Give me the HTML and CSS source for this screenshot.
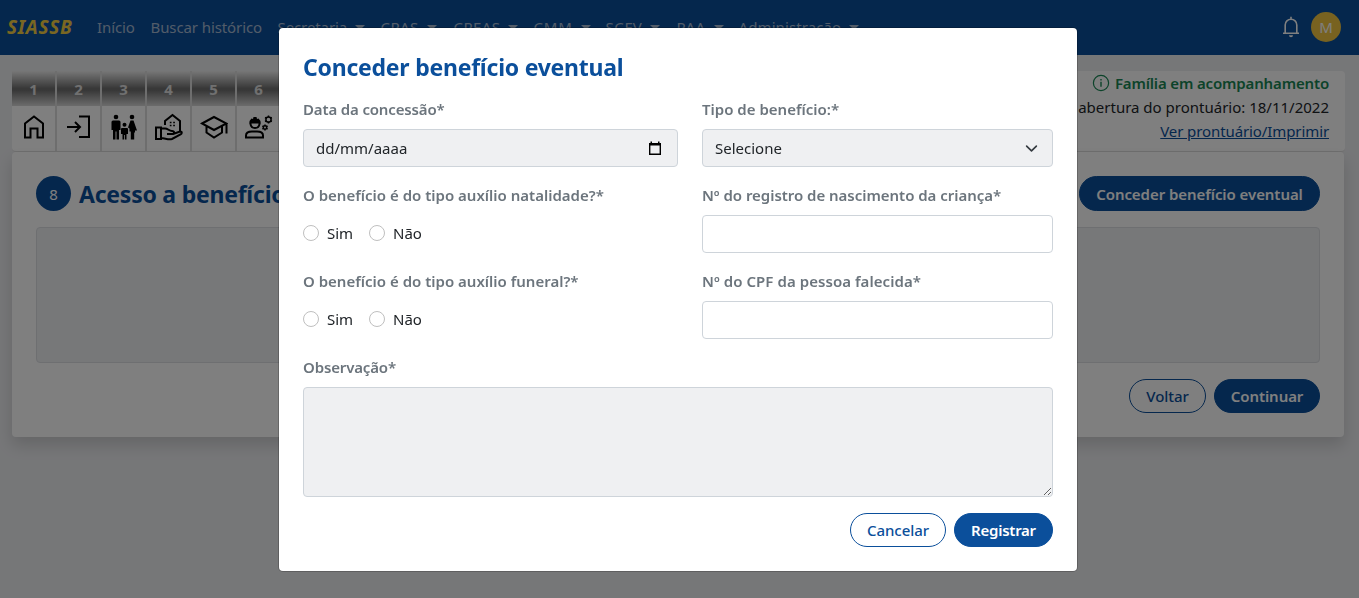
FILE: index.html
```html
<!DOCTYPE html>
<html lang="pt-BR">
<head>
<meta charset="utf-8">
<title>SIASSB</title>
<link rel="stylesheet" href="styles.css">
</head>
<body>
<header class="navbar">
  <span class="brand">SIASSB</span>
  <nav class="menu">
    <a class="inicio">Início</a>
    <a class="buscar">Buscar histórico</a>
    <a class="drop m1">Secretaria</a>
    <a class="drop m2">CRAS</a>
    <a class="drop m3">CREAS</a>
    <a class="drop m4">CMM</a>
    <a class="drop m5">SCFV</a>
    <a class="drop m6">PAA</a>
    <a class="drop m7">Administração</a>
  </nav>
  <svg class="bell" width="18" height="22" viewBox="0 0 18 22" fill="none" stroke="#fff" stroke-width="1.6"><path d="M1 17.3h16M3.2 17V9a5.8 5.8 0 0 1 11.6 0v8M9 3V.8"/><path d="M7 19.2h4a2 2 0 0 1-4 0z" fill="#fff" stroke="none"/></svg>
  <span class="avatar">M</span>
</header>
<main>
  <section class="record">
    <ol class="steps">
      <li><b>1</b><span><svg viewBox="0 0 28 28"><path d="M5 24.500V10.500L14 3.500l9 7v14h-5.500v-9h-7v9z"/></svg></span></li>
      <li><b>2</b><span><svg viewBox="0 0 28 28"><path d="M14 3.500h10v20.500H14M2 14h13M10 9l5 5-5 5"/></svg></span></li>
      <li><b>3</b><span><svg class="solid" viewBox="0 0 28 28"><circle cx="6" cy="4" r="2.300"/><circle cx="22" cy="4" r="2.300"/><circle cx="14.500" cy="11.700" r="2"/><path d="M3 7.500h6q1.500 0 1.500 1.500v8H9v9.500H6.500v-8h-1v8H3V17H1.500V9Q1.500 7.500 3 7.500zM20.500 7.500h3l3.500 10h-2v2h-.800v7h-3.400v-8H19.500v-3l-1.500-1zM12 15h5q1 0 1 1v5h-1.500v5.500h-1.600V22h-.800v4.500H12.500V21h-1.500v-5q0-1 1-1z"/></svg></span></li>
      <li><b>4</b><span><svg viewBox="0 0 28 28"><path d="M10 12V8l7.500-6L25 8v10"/><path d="M1 14.500h5V26H1zM6 15.500h4c3 0 4 2.500 7 2.500s2.500 3 0 3h-5M18 21l7-2.500c2.500 0 2 2 .500 3L17 26c-4 1-7-1-11-1"/><path d="M14.800 9.500h1.700m1.700 0h1.700m-5.100 3h1.700m1.700 0h1.700" stroke-width="1.500"/></svg></span></li>
      <li><b>5</b><span><svg viewBox="0 0 28 28"><path d="M2 10.500L14 4l12.500 6.500L14 17zM6.500 13v6.500L14 24.500l8-5V13M26.500 10.500v10"/></svg></span></li>
      <li><b>6</b><span><svg viewBox="0 0 28 28"><path d="M1 24.500v-2q0-4 6-4h5q6 0 6 4v2z"/><path d="M5.500 9.500v1.500q.500 4 4.500 4t4.500-4V9.500"/><path class="fill" d="M4.500 10.500V8l2-2.500 1.500.500.500-2h3l.500 2 1.500-.500 2 2.500v2.500z"/><g stroke-width="1.500"><circle cx="23.500" cy="6.500" r="2.600"/><circle cx="20" cy="14.500" r="1.700"/><path d="M23.500 2.500v1.400m0 5.200v1.400M20 4.500l1.200.700m4.500 2.600l1.200.700m0-4l-1.200.700m-4.500 2.600l-1.200.700M20 11.500v1.300m0 3.400v1.300M17.400 13l1.100.700m3 1.700l1.100.600m0-3l-1.100.700m-3 1.700l-1.100.600"/></g></svg></span></li>
    </ol>
    <div class="status">
      <strong><svg width="18" height="18" viewBox="0 0 18 18" fill="none" stroke="#198754" stroke-width="1.200"><circle cx="9" cy="9" r="7.600"/><path d="M9 7.800v5M9 5v1.400" stroke-width="1.400"/></svg><span>Família em acompanhamento</span></strong>
      <span class="opened">abertura do prontuário: 18/11/2022</span>
      <a>Ver prontuário/Imprimir</a>
    </div>
  </section>
  <section class="card">
    <div class="card-head">
      <span class="num">8</span>
      <h2>Acesso a benefícios</h2>
      <button class="btn primary open">Conceder benefício eventual</button>
    </div>
    <div class="empty"></div>
    <div class="actions">
      <button class="btn outline voltar">Voltar</button>
      <button class="btn primary continuar">Continuar</button>
    </div>
  </section>
</main>
<div class="backdrop">
  <form class="modal">
    <h1>Conceder benefício eventual</h1>
    <div class="grid">
      <div class="field">
        <label class="l1">Data da concessão*</label>
        <div class="control filled"><span class="date">dd/mm/aaaa</span><svg class="cal" width="14" height="15" viewBox="0 0 14 15"><path d="M1.700 3v10.300h10.600V3" fill="none" stroke="#000" stroke-width="1.400"/><path d="M1 2h12v2.600H1zM2.500.5H4V2H2.500zM10 .5h1.500V2H10z"/></svg></div>
      </div>
      <div class="field">
        <label class="l2">Tipo de benefício:*</label>
        <div class="control filled"><span class="select">Selecione</span><svg class="chev" width="13" height="13" viewBox="0 0 16 16" fill="none" stroke="#343a40" stroke-width="2" stroke-linecap="round" stroke-linejoin="round"><path d="M2 5l6 6 6-6"/></svg></div>
      </div>
      <div class="field">
        <label class="l3">O benefício é do tipo auxílio natalidade?*</label>
        <div class="radios"><i></i><span class="sim">Sim</span><i></i><span class="nao">Não</span></div>
      </div>
      <div class="field">
        <label class="l4">Nº do registro de nascimento da criança*</label>
        <div class="control"></div>
      </div>
      <div class="field">
        <label class="l5">O benefício é do tipo auxílio funeral?*</label>
        <div class="radios"><i></i><span class="sim">Sim</span><i></i><span class="nao">Não</span></div>
      </div>
      <div class="field">
        <label class="l6">Nº do CPF da pessoa falecida*</label>
        <div class="control"></div>
      </div>
      <div class="field wide">
        <label class="l7">Observação*</label>
        <textarea class="filled"></textarea>
      </div>
    </div>
    <div class="actions">
      <button type="button" class="btn outline cancelar">Cancelar</button>
      <button type="button" class="btn primary registrar">Registrar</button>
    </div>
  </form>
</div>
</body>
</html>
```
FILE: styles.css
```css
* { box-sizing: border-box; }
body { margin: 0; height: 598px; overflow: hidden; background: #edeef1; color: #212529; font: 15px/24px "Noto Sans", sans-serif; }
.navbar { height: 55px; background: #0b4f9b; display: flex; align-items: center; padding: 0 18px 2px 7px; }
.brand { width: 90px; font-size: 19px; font-weight: 700; font-style: italic; letter-spacing: .7px; color: #f5cf45; }
.menu { display: flex; flex: 1; color: #a4b9d3; white-space: nowrap; }
.drop::after { content: ""; display: inline-block; margin-left: 8px; vertical-align: 3px; border: 5px solid transparent; border-top-color: currentColor; border-bottom: 0; }
.inicio { width: 53.500px; letter-spacing: -.1px; }
.buscar { width: 127px; letter-spacing: -.1px; }
.m1 { width: 103px; letter-spacing: -.1px; }
.m2 { width: 73px; letter-spacing: .4px; }
.m3 { width: 80px; letter-spacing: .4px; }
.m4 { width: 72px; letter-spacing: .8px; }
.m5 { width: 71px; letter-spacing: .6px; }
.m6 { width: 62px; letter-spacing: .6px; }
.m7 { letter-spacing: .1px; }
.bell { margin-right: 11px; }
.avatar { width: 30px; height: 30px; border-radius: 50%; background: #f0c541; color: #fff; text-align: center; line-height: 30px; }
main { padding: 16px 14px 0 12px; }
.record { height: 81px; display: flex; justify-content: space-between; background: #fff; border-radius: 4px; border-bottom: 1px solid #ddd; }
.steps { display: flex; list-style: none; margin: 0; padding: 0; }
.steps li { width: 45px; border-right: 2px solid #dcdcdc; }
.steps b { display: block; height: 35px; line-height: 37px; text-align: center; color: #e0e0e0; background: linear-gradient(#eee, #707070 50%, #707070 55%, #d8d8d8); }
.steps span { height: 45px; display: flex; align-items: center; justify-content: center; padding-bottom: 3px; }
.steps svg { width: 28px; height: 28px; fill: none; stroke: #000; stroke-width: 2; }
.steps .solid, .steps .fill { fill: #000; stroke: none; }
.status { display: flex; flex-direction: column; align-items: flex-end; padding: 0 16px 0 0; }
.status strong { display: flex; align-items: center; gap: 5px; color: #198754; font-weight: 600; letter-spacing: -.15px; }
.status a { color: #0b4f9b; text-decoration: underline; letter-spacing: -.1px; }
.card { width: 1332px; height: 285px; background: #fff; border-radius: 4px; padding: 24px; box-shadow: 0 8px 16px rgba(0,0,0,.15); }
.card-head { display: flex; align-items: center; height: 35px; }
.num { width: 35px; height: 35px; border-radius: 50%; background: #0b4f9b; color: #fff; text-align: center; line-height: 36px; }
h1, h2 { margin: 0; color: #0b4f9b; font-size: 23px; line-height: 29px; font-weight: 700; letter-spacing: -.23px; white-space: nowrap; }
h1 { padding-top: 1px; height: 29px; }
h2 { margin-left: 8px; flex: 1; padding-top: 2px; }
.empty { height: 136px; margin: 16px 0; border: 1px solid #dcdfe3; border-radius: 4px; background: #eff0f2; }
.actions { display: flex; justify-content: flex-end; gap: 8px; }
.btn { height: 34px; border: 1px solid #0b4f9b; border-radius: 18px; padding: 0; font: 600 15px/24px "Noto Sans", sans-serif; letter-spacing: -.06px; white-space: nowrap; }
.primary { background: #0b4f9b; color: #fff; }
.outline { background: #fff; color: #0b4f9b; font-weight: 500; }
.open { width: 241px; height: 35px; }
.voltar { width: 77px; }
.continuar { width: 106px; }
.cancelar { width: 96px; }
.registrar { width: 99px; letter-spacing: -.25px; }
.backdrop { position: fixed; inset: 0; background: rgba(0,0,0,.5); padding: 28px 0 0 279px; }
.modal { width: 798px; height: 543px; background: #fff; border-radius: 4px; padding: 24px; box-shadow: 0 0 0 1px rgba(0,0,0,.2); }
.grid { display: grid; grid-template-columns: 375px 351px; gap: 16px 24px; margin: 16px 0; }
.field { display: flex; flex-direction: column; gap: 8px; }
.wide { grid-column: 1 / 3; }
label { height: 24px; color: #6c757d; font-weight: 600; white-space: nowrap; }
.l1, .l7 { letter-spacing: -.15px; }
.l4 { letter-spacing: -.03px; }
.l6 { letter-spacing: .06px; }
.control { height: 38px; border: 1px solid #ced4da; border-radius: 4px; display: flex; align-items: center; justify-content: space-between; padding: 0 12px; }
.filled { background: #eff0f2; }
.cal { margin-right: 3px; }
.chev { margin-right: 2px; }
.radios { height: 38px; display: flex; align-items: center; padding-bottom: 2px; }
.radios i { width: 16px; height: 16px; border: 1px solid #bfbfbf; border-radius: 50%; margin-right: 8px; }
.sim { width: 42px; }
textarea { height: 110px; width: 100%; border: 1px solid #ced4da; border-radius: 4px; resize: vertical; }
```
